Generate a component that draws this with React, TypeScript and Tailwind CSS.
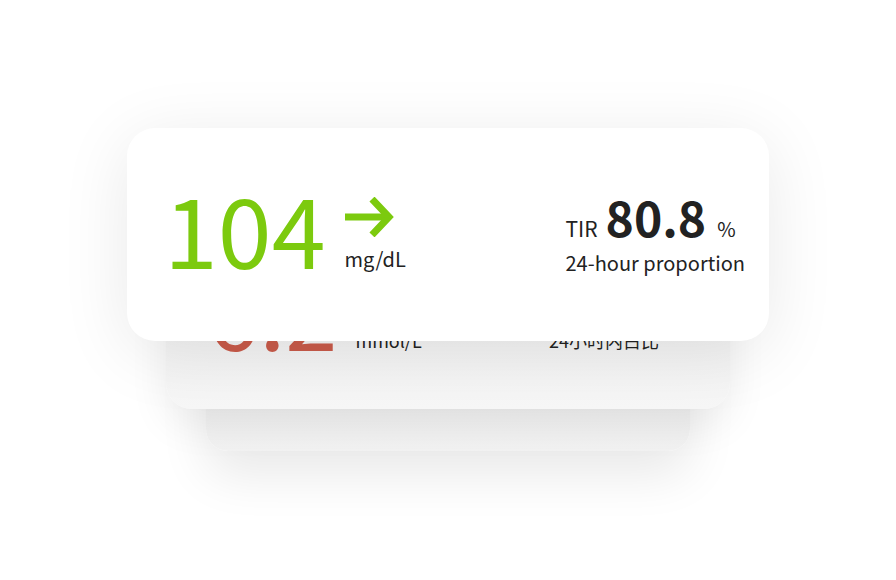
import React from 'react';

const font = { fontFamily: '"Noto Sans CJK SC", "Source Sans Pro", sans-serif' };

const ArrowRight: React.FC<{ className?: string }> = ({ className }) => (
  <svg viewBox="0 0 50 40" className={className} fill="none">
    <path d="M0 20 H44" stroke="currentColor" strokeWidth="7" />
    <path d="M27 2 L44 20 L27 38" stroke="currentColor" strokeWidth="7" strokeLinejoin="miter" />
  </svg>
);

export default function App() {
  return (
    <div style={font} className="w-[896px] h-[580px] overflow-hidden bg-white pt-[128px] pl-[127px]">
      {/* stacked reading cards */}
      <div className="grid w-[642px]">
        {/* back-most card */}
        <div className="col-start-1 row-start-1 self-start ml-[79px] mt-[122px] w-[484px] h-[201px] rounded-[22px] bg-gradient-to-b from-[#e6e6e6] to-[#f2f2f2] shadow-[0_24px_50px_rgba(0,0,0,0.09)]" />

        {/* previous reading (mmol/L) */}
        <div className="col-start-1 row-start-1 self-start ml-[39px] mt-[72px] w-[564px] h-[209px] rounded-[26px] bg-gradient-to-b from-[#e9e9e9] to-[#f7f7f7] shadow-[0_16px_40px_rgba(0,0,0,0.07)] flex items-end pb-[60px]">
          <div className="flex items-end pl-[41px]">
            <span className="text-[94px] leading-[0.75] text-[#c95b4a] mb-[4px]">6.2</span>
            <span className="ml-[18px] text-[18px] leading-none text-[#222]">mmol/L</span>
          </div>
          <span className="ml-auto mr-[71px] text-[18px] leading-none text-[#222]">24小时内占比</span>
        </div>

        {/* current reading */}
        <div className="col-start-1 row-start-1 self-start w-[642px] h-[213px] rounded-[28px] bg-white shadow-[0_12px_70px_rgba(0,0,0,0.09)] flex items-center justify-between pl-[37px] pr-[24px]">
          <div className="flex items-end mt-[-15px]">
            <span className="text-[97px] leading-[0.75] text-[#7cca0e]">104</span>
            <div className="ml-[19px] flex flex-col items-start">
              <ArrowRight className="w-[50px] h-[40px] text-[#7cca0e] mb-[12px]" />
              <span className="text-[20px] leading-none text-[#222] mb-[-6px]">mg/dL</span>
            </div>
          </div>
          <div className="flex flex-col items-start mt-[-4px]">
            <div className="flex items-baseline text-[#222]">
              <span className="text-[21px]">TIR</span>
              <span className="ml-[8px] text-[48px] font-bold leading-none">80.8</span>
              <span className="ml-[11px] text-[20px]">%</span>
            </div>
            <span className="mt-[9px] text-[20px] leading-none text-[#222]">24-hour proportion</span>
          </div>
        </div>
      </div>
    </div>
  );
}
